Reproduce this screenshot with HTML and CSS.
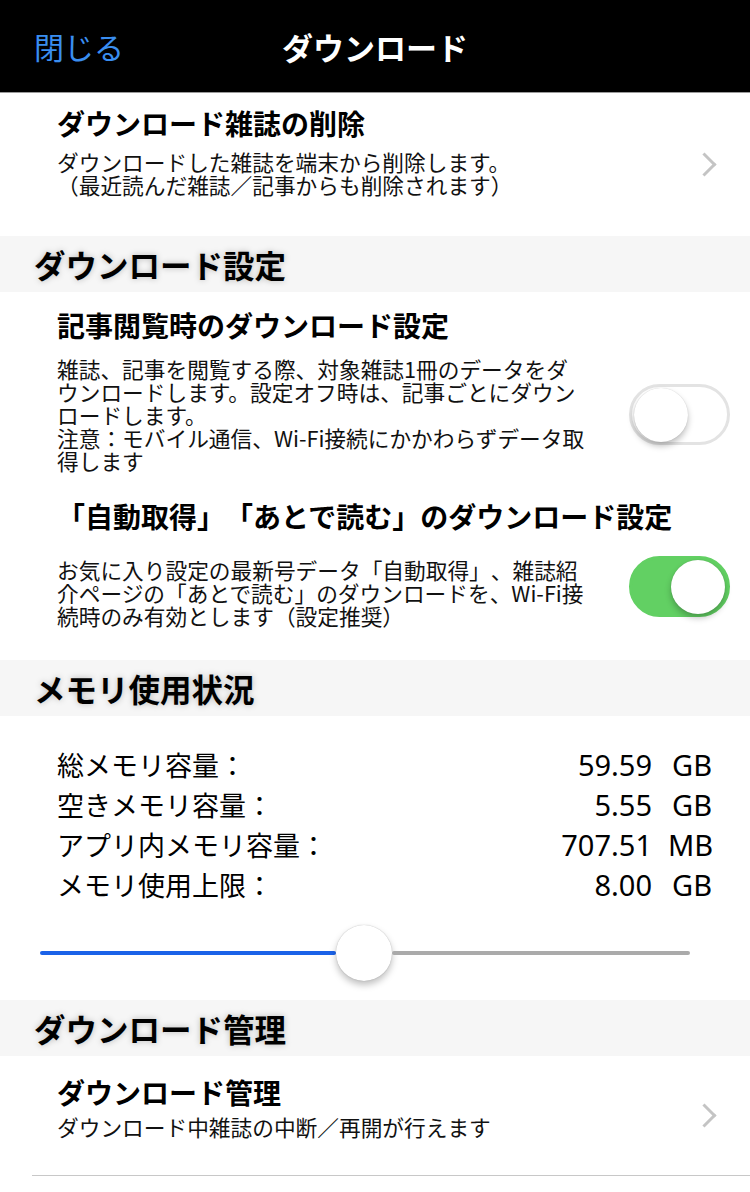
FILE: index.html
```html
<!doctype html>
<html lang="ja">
<head>
    <meta charset="UTF-8">
    <meta name="viewport" content="width=device-width, initial-scale=1.0">
    <title>ダウンロード</title>
    <link rel="stylesheet" href="styles.css">
</head>
<body>
    <header class="navbar">
        <span class="nav-close">閉じる</span>
        <span class="nav-title">ダウンロード</span>
        <span></span>
    </header>

    <div class="link-row delete-row">
        <div class="link-text">
            <div class="item-title">ダウンロード雑誌の削除</div>
            <div class="item-desc">ダウンロードした雑誌を端末から削除します。<br>（最近読んだ雑誌／記事からも削除されます）</div>
        </div>
        <span class="chevron"></span>
    </div>

    <div class="section-header">ダウンロード設定</div>

    <div class="setting first-setting">
        <div class="item-title">記事閲覧時のダウンロード設定</div>
        <div class="setting-body">
            <div class="item-desc">雑誌、記事を閲覧する際、対象雑誌1冊のデータをダ<br>ウンロードします。設定オフ時は、記事ごとにダウン<br>ロードします。<br>注意：モバイル通信、Wi-Fi接続にかかわらずデータ取<br>得します</div>
            <span class="toggle"><span class="knob"></span></span>
        </div>
    </div>

    <div class="setting second-setting">
        <div class="item-title">「自動取得」「あとで読む」のダウンロード設定</div>
        <div class="setting-body">
            <div class="item-desc">お気に入り設定の最新号データ「自動取得」、雑誌紹<br>介ページの「あとで読む」のダウンロードを、Wi-Fi接<br>続時のみ有効とします（設定推奨）</div>
            <span class="toggle on"><span class="knob"></span></span>
        </div>
    </div>

    <div class="section-header">メモリ使用状況</div>

    <div class="memory">
        <div class="memory-table">
            <span>総メモリ容量：</span><span class="num">59.59</span><span class="unit">GB</span>
            <span>空きメモリ容量：</span><span class="num">5.55</span><span class="unit">GB</span>
            <span>アプリ内メモリ容量：</span><span class="num">707.51</span><span class="unit">MB</span>
            <span>メモリ使用上限：</span><span class="num">8.00</span><span class="unit">GB</span>
        </div>
        <div class="slider">
            <span class="slider-fill" style="width: 296px"></span>
            <span class="slider-thumb"></span>
            <span class="slider-rest"></span>
        </div>
    </div>

    <div class="section-header">ダウンロード管理</div>

    <div class="link-row manage-row">
        <div class="link-text">
            <div class="item-title">ダウンロード管理</div>
            <div class="item-desc">ダウンロード中雑誌の中断／再開が行えます</div>
        </div>
        <span class="chevron"></span>
    </div>
</body>
</html>
```

FILE: styles.css
```css
body {
    margin: 0;
    width: 750px;
    background: #fff;
    color: #000;
    font-family: "Noto Sans CJK JP", "Noto Sans", sans-serif;
    text-spacing-trim: space-all;
}
.navbar {
    display: grid;
    grid-template-columns: 1fr auto 1fr;
    align-items: center;
    height: 92px;
    padding: 0 34px;
    background: #000;
    border-bottom: 1px solid #9a9a9a;
}
.nav-close {
    color: #3a8ef0;
    font-size: 30px;
}
.nav-title {
    color: #fff;
    font-size: 31px;
    font-weight: bold;
}
.item-title {
    font-size: 28px;
    font-weight: bold;
    line-height: 36px;
    white-space: nowrap;
}
.item-desc {
    font-size: 21.7px;
    line-height: 23px;
    color: #111;
    white-space: nowrap;
}
.link-row {
    display: flex;
    align-items: center;
    padding-left: 57px;
    padding-right: 33px;
}
.link-text {
    flex: 1;
    align-self: flex-start;
}
.delete-row {
    height: 143px;
}
.delete-row .link-text {
    padding-top: 12px;
}
.delete-row .item-desc {
    margin-top: 9px;
}
.manage-row {
    height: 119px;
    margin-left: 32px;
    padding-left: 25px;
    border-bottom: 1px solid #c8c8c8;
}
.manage-row .link-text {
    padding-top: 18px;
}
.manage-row .item-desc {
    margin-top: 5px;
}
.chevron {
    width: 14px;
    height: 14px;
    border-top: 3px solid #c4c4c4;
    border-right: 3px solid #c4c4c4;
    transform: rotate(45deg);
    margin-right: 4px;
}
.section-header {
    height: 56px;
    line-height: 56px;
    padding-left: 34px;
    background: #f6f6f6;
    font-size: 31.5px;
    font-weight: bold;
    text-shadow: 0 0 6px rgba(0, 0, 0, 0.25);
}
.setting {
    padding-left: 57px;
    padding-right: 20px;
}
.setting-body {
    display: flex;
    align-items: center;
}
.setting-body .item-desc {
    flex: 1;
}
.first-setting {
    padding-top: 15px;
}
.first-setting .setting-body {
    margin-top: 14px;
}
.second-setting {
    padding-top: 26px;
    padding-bottom: 33px;
}
.second-setting .setting-body {
    margin-top: 24px;
}
.second-setting .toggle {
    margin-top: -12px;
}
.toggle {
    display: flex;
    align-items: center;
    box-sizing: border-box;
    width: 101px;
    height: 61px;
    padding: 0 2px;
    border: 3px solid #e3e3e3;
    border-radius: 31px;
    background: #fff;
}
.toggle.on {
    justify-content: flex-end;
    border-color: #62d063;
    background: #62d063;
}
.knob {
    width: 54px;
    height: 54px;
    border-radius: 50%;
    background: #fff;
    box-shadow: 0 4px 6px rgba(0, 0, 0, 0.25), 0 0 1px rgba(0, 0, 0, 0.2);
}
.memory {
    padding: 29px 0 19px 0;
}
.memory-table {
    display: grid;
    grid-template-columns: 1fr auto 44px;
    column-gap: 16px;
    padding: 0 38px 0 57px;
    font-size: 27px;
    line-height: 40px;
}
.num, .unit {
    text-align: right;
    font-family: "Noto Sans", sans-serif;
    font-size: 29px;
}
.slider {
    display: flex;
    align-items: center;
    height: 56px;
    margin: 20px 60px 0 40px;
}
.slider-fill {
    height: 4px;
    border-radius: 2px;
    background: #1a62e8;
}
.slider-rest {
    flex: 1;
    height: 4px;
    border-radius: 2px;
    background: #aaa;
}
.slider-thumb {
    width: 56px;
    height: 56px;
    border-radius: 50%;
    background: #fff;
    box-shadow: 0 4px 7px rgba(0, 0, 0, 0.25), 0 0 1px rgba(0, 0, 0, 0.3);
}
```
